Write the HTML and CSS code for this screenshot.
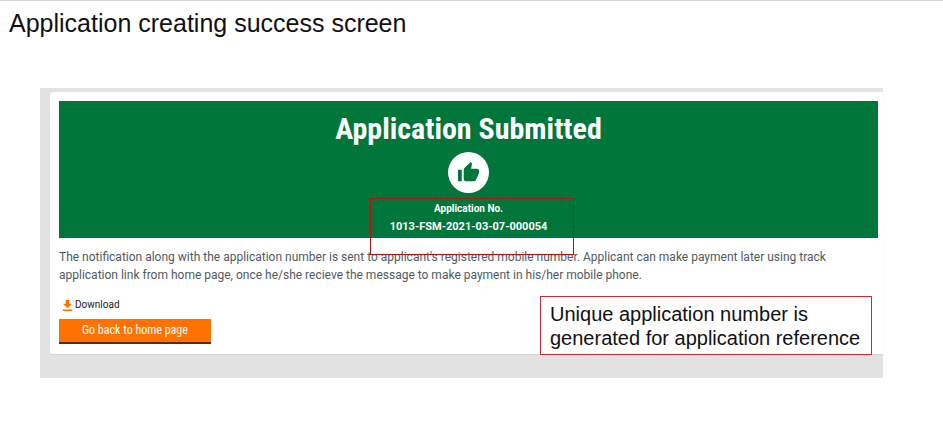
FILE: index.html
```html
<!DOCTYPE html>
<html lang="en">
<head>
<meta charset="utf-8">
<meta name="viewport" content="width=device-width, initial-scale=1">
<title>Application creating success screen</title>
<link rel="stylesheet" href="styles.css">
</head>
<body>
<h1 class="page-title">Application creating success screen</h1>
<main class="frame">
  <section class="card">
    <div class="banner">
      <h2 class="banner-title">Application Submitted</h2>
      <div class="badge">
        <svg class="thumb" viewBox="0 0 24 24" aria-hidden="true"><path d="M1 21h4V9H1v12zm22-11c0-1.100-.9-2-2-2h-6.310l.95-4.570.03-.32c0-.41-.17-.79-.44-1.060L14.170 1 7.590 7.590C7.220 7.950 7 8.450 7 9v10c0 1.100.9 2 2 2h9c.83 0 1.540-.5 1.840-1.220l3.020-7.050c.09-.23.14-.47.14-.73v-2z"/></svg>
      </div>
      <div class="number">
        <p class="number-label">Application No.</p>
        <p class="number-value">1013-FSM-2021-03-07-000054</p>
        <span class="highlight"></span>
      </div>
    </div>
    <p class="message">The notification along with the application number is sent to applicant's registered mobile number. Applicant can make payment later using track application link from home page, once he/she recieve the message to make payment in his/her mobile phone.</p>
    <a class="download" href="#">
      <svg class="download-icon" viewBox="0 0 10 12" aria-hidden="true"><path d="M3 0h4v4h3L5 9 0 4h3zM0 10.500h10V12H0z"/></svg>
      Download
    </a>
    <button class="home" type="button">Go back to home page</button>
  </section>
  <aside class="note">Unique application number is generated for application reference</aside>
</main>
</body>
</html>
```

FILE: styles.css
```css
* {
  box-sizing: border-box;
}

body {
  margin: 0;
  border-top: 1px solid #d4d4d4;
  background: #fff;
  color: #111;
  font-family: Roboto, "Liberation Sans", sans-serif;
}

h1, h2, p {
  margin: 0;
}

.page-title {
  padding: 8px 9px;
  font: 25px/28px "Liberation Sans", Arial, sans-serif;
}

.frame {
  position: relative;
  margin: 43px 60px 52px 40px;
  padding: 4px 0 24px 10px;
  background: #e2e2e2;
}

.card {
  display: flex;
  flex-direction: column;
  align-items: flex-start;
  padding: 9px 5px 10px 9px;
  border-radius: 3px 0 0 3px;
  background: #fff;
  box-shadow: 0 1px 1px #d4d4d4;
}

.banner {
  display: flex;
  flex-direction: column;
  align-items: center;
  align-self: stretch;
  padding: 10px 0 2px;
  background: #00763a;
  color: #fff;
}

.banner-title {
  font: bold 30px/36px "Roboto Condensed", Roboto, sans-serif;
}

.badge {
  display: grid;
  place-items: center;
  width: 41px;
  height: 41px;
  margin-top: 5px;
  border-radius: 50%;
  background: #fff;
}

.thumb {
  width: 23px;
  height: 23px;
  fill: #00763a;
}

.number {
  position: relative;
  padding-top: 7px;
  text-align: center;
}

.number-label {
  font-size: 10px;
  font-weight: bold;
  line-height: 18px;
}

.number-value {
  font-size: 11px;
  font-weight: bold;
  line-height: 18px;
}

.highlight {
  position: absolute;
  top: 5px;
  left: -20px;
  right: -27px;
  height: 57px;
  border: 1px solid #c00d12;
}

.message {
  max-width: 790px;
  margin-top: 10px;
  color: #505a5f;
  font-size: 12px;
  line-height: 18px;
}

.download {
  display: flex;
  align-items: center;
  gap: 3px;
  margin-top: 12px;
  padding-left: 4px;
  color: #222;
  font-size: 10px;
  line-height: 18px;
  text-decoration: none;
}

.download-icon {
  width: 9px;
  height: 11px;
  fill: #ff7200;
}

.home {
  margin-top: 5px;
  padding: 0 23px;
  border: 0;
  border-bottom: 2px solid #5a2b06;
  background: #ff7200;
  color: #fff;
  font: 12px/23px "Roboto Condensed", Roboto, sans-serif;
}

.note {
  position: absolute;
  right: 11px;
  bottom: 23px;
  width: 332px;
  padding: 5px 9px 4px;
  border: 1px solid #cc2a2e;
  background: #fff;
  font: 20px/24px "Liberation Sans", Arial, sans-serif;
}
```
